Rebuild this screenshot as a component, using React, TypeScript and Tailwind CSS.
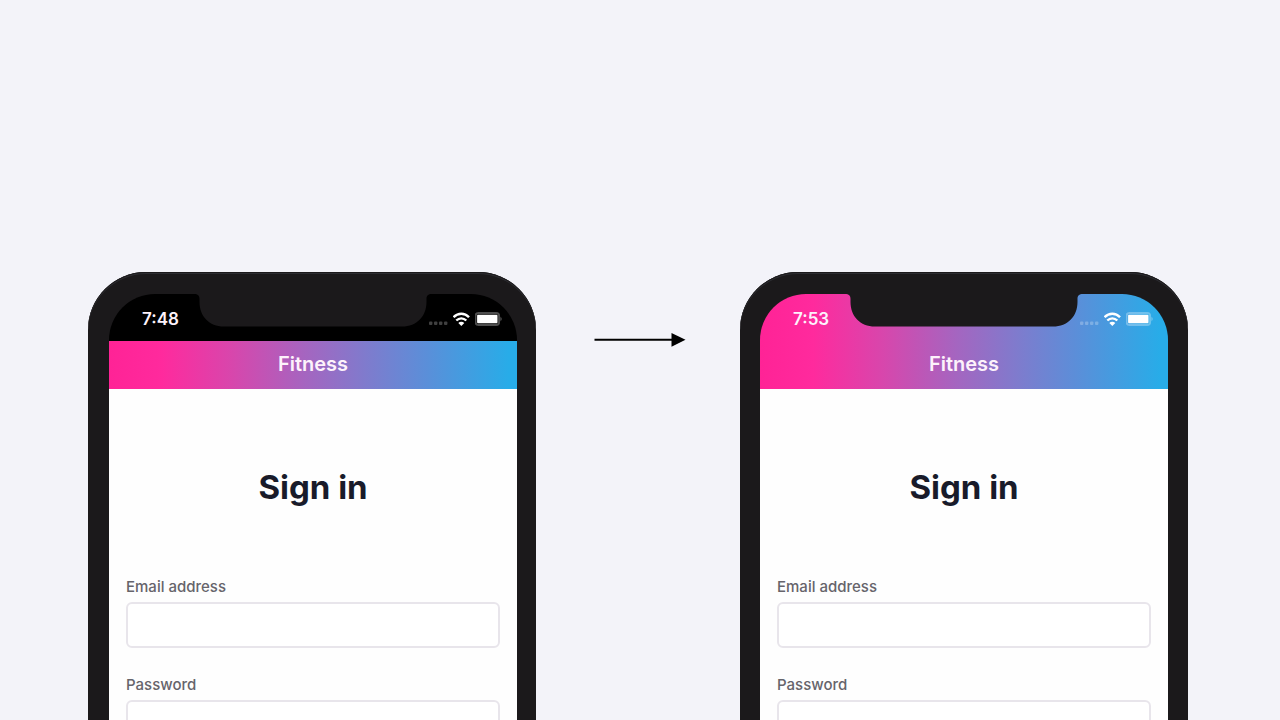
type PhoneProps = {
    id: string
    time: string
    translucent?: boolean
    frame: string
}

const gradient = "bg-[linear-gradient(to_right,#ff2396_0%,#ff2a9d_13%,#d846ac_30%,#a565c0_48%,#7f7bcd_63%,#5a8fd9_78%,#28ace8_98%)]"

function Notch() {
    return (
        <svg viewBox="0 0 238 33" className="absolute top-0 left-1/2 -translate-x-1/2 w-[238px] h-[33px] text-[#1b191b]" fill="currentColor" aria-hidden="true">
            <path d="M0 0H238C234 0 232.500 1.500 232.500 5V8C232.500 22 223 32.500 208 32.500H30C15 32.500 5.500 22 5.500 8V5C5.500 1.500 4 0 0 0Z" />
        </svg>
    )
}

function Signal() {
    return (
        <svg viewBox="0 0 20 16" className="w-5 h-4" fill="white" fillOpacity="0.25" aria-hidden="true">
            <rect x="0" y="10.500" width="3.400" height="3.400" rx="1" />
            <rect x="5" y="10.500" width="3.400" height="3.400" rx="1" />
            <rect x="10" y="10.500" width="3.400" height="3.400" rx="1" />
            <rect x="15" y="10.500" width="3.400" height="3.400" rx="1" />
        </svg>
    )
}

function Wifi() {
    return (
        <svg viewBox="0 0 18 16" className="w-[18px] h-4" fill="none" stroke="white" strokeWidth="2.4" aria-hidden="true">
            <path d="M0.600 6.200C4.900 1.600 11.700 1.600 16 6.200" />
            <path d="M3.300 9.500C6.200 6.600 10.400 6.600 13.300 9.500" />
            <path d="M8.300 15L5.300 11.900C7 10.400 9.600 10.400 11.300 11.900Z" fill="white" stroke="none" />
        </svg>
    )
}

function Battery() {
    return (
        <svg viewBox="0 0 28 16" className="w-7 h-4" fill="none" aria-hidden="true">
            <rect x="0.500" y="2" width="23.600" height="12" rx="3" stroke="white" strokeOpacity="0.3" strokeWidth="2" />
            <rect x="2.100" y="3.700" width="20.400" height="8.600" rx="1" fill="white" />
            <path d="M25.500 6C27 6.500 27 9.500 25.500 10Z" fill="white" fillOpacity="0.4" />
        </svg>
    )
}

function Field({ id, label, type }: { id: string; label: string; type: string }) {
    return (
        <div className="flex flex-col gap-[3px]">
            <label htmlFor={id} className="pt-[3px] text-[15px] leading-6 font-medium text-[#66646b]">{label}</label>
            <input id={id} type={type} className="w-full h-[46px] px-3 rounded-md border-2 border-[#e8e5eb] bg-white outline-none" />
        </div>
    )
}

function Phone({ id, time, translucent, frame }: PhoneProps) {
    return (
        <section className={`w-full max-w-[448px] pt-[22px] pb-5 rounded-[58px] bg-[#1b191b] shadow-[inset_0_1px_0_#1b191b,inset_0_2px_0_#2d2d32] ${frame}`}>
            <div className="relative rounded-t-[46px] overflow-hidden">
                <header className={translucent ? gradient : "bg-black"}>
                    <div className="flex items-center justify-between h-[47px] pt-[3px] pl-[33px] pr-[14px]">
                        <span className="text-[17px] leading-6 font-semibold text-[#fdf2fb]">{time}</span>
                        <div className="flex items-center gap-1">
                            <Signal />
                            <Wifi />
                            <Battery />
                        </div>
                    </div>
                    <div className={`flex items-center justify-center h-12 pb-0.5 ${translucent ? "" : gradient}`}>
                        <h1 className="text-xl leading-6 font-semibold text-[#fdf2fb]">Fitness</h1>
                    </div>
                    <Notch />
                </header>
                <form className="px-[17px] pt-[78px] pb-20 bg-[#fefefe]">
                    <h2 className="text-[33px] leading-10 font-bold text-center text-[#191b2a]">Sign in</h2>
                    <div className="flex flex-col gap-[22px] pt-[65px]">
                        <Field id={`${id}-email`} label="Email address" type="email" />
                        <Field id={`${id}-password`} label="Password" type="password" />
                    </div>
                </form>
            </div>
        </section>
    )
}

export default function App() {
    return (
        <main className="flex items-start justify-center h-screen overflow-hidden pt-[272px] pr-1 bg-[#f3f3f9] font-['Inter',sans-serif]">
            <Phone id="before" time="7:48" frame="pl-[21px] pr-[19px]" />
            <div className="flex justify-center shrink-0 w-[204px] pt-[60px] pl-[3px]">
                <svg viewBox="0 0 92 16" className="w-[92px] h-4" aria-hidden="true">
                    <path d="M0.500 7.800H80" stroke="black" strokeWidth="2" />
                    <path d="M77.500 1L91.500 7.800L77.500 14.800Z" fill="black" />
                </svg>
            </div>
            <Phone id="after" time="7:53" translucent frame="px-5" />
        </main>
    )
}
